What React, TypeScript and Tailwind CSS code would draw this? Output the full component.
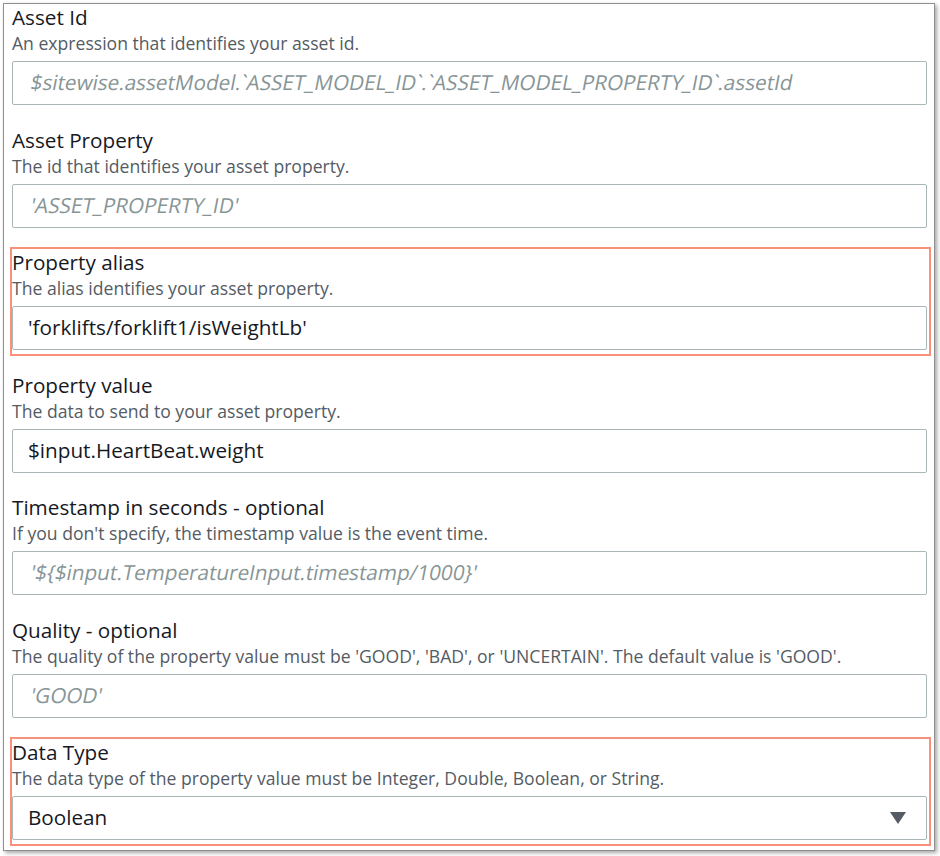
import React from 'react';
import { clsx } from 'clsx';

interface FieldProps {
  label: string;
  description: string;
  value?: string;
  placeholder?: string;
  highlighted?: boolean;
  select?: boolean;
}

const Field: React.FC<FieldProps> = ({ label, description, value, placeholder, highlighted, select }) => {
  return (
    <div
      className={clsx(
        'ml-[8px] w-[917px] pb-[4px] flex flex-col',
        highlighted && 'outline-2 outline-[#f9907c]'
      )}
    >
      <div className="h-[26px] leading-[26px] text-[20.7px] text-[#16191f] whitespace-nowrap">{label}</div>
      <div className="h-[26px] leading-[26px] text-[17.6px] text-[#545b64] whitespace-nowrap">{description}</div>
      <div className="mt-[5px] w-[915px] h-[44px] border border-[#aab7b8] rounded-[2px] flex items-center pl-[15px] pr-[20px]">
        {value ? (
          <span className="flex-1 text-[20.7px] text-[#16191f] whitespace-nowrap">{value}</span>
        ) : (
          <span className="flex-1 text-[20.7px] text-[#879596] whitespace-nowrap">
            <span className="inline-block -skew-x-[11deg] origin-bottom">{placeholder}</span>
          </span>
        )}
        {select && (
          <svg width="16" height="12" viewBox="0 0 16 12" className="shrink-0">
            <path d="M0 0 H16 L8 12 Z" fill="#545b64" />
          </svg>
        )}
      </div>
    </div>
  );
};

export default function App() {
  return (
    <div className="w-[940px] h-[856px] bg-white pt-[3px] pl-[3px]" style={{ fontFamily: '"Open Sans", "Liberation Sans", sans-serif' }}>
      <div className="w-[932px] h-[848px] border border-[#8f8f8f] shadow-[2px_2px_4px_rgba(0,0,0,0.35)] flex flex-col gap-[17.5px] overflow-hidden">
        <Field
          label="Asset Id"
          description="An expression that identifies your asset id."
          placeholder="$sitewise.assetModel.`ASSET_MODEL_ID`.`ASSET_MODEL_PROPERTY_ID`.assetId"
        />
        <Field
          label="Asset Property"
          description="The id that identifies your asset property."
          placeholder="'ASSET_PROPERTY_ID'"
        />
        <Field
          label="Property alias"
          description="The alias identifies your asset property."
          value="'forklifts/forklift1/isWeightLb'"
          highlighted
        />
        <Field
          label="Property value"
          description="The data to send to your asset property."
          value="$input.HeartBeat.weight"
        />
        <Field
          label="Timestamp in seconds - optional"
          description="If you don't specify, the timestamp value is the event time."
          placeholder="'${$input.TemperatureInput.timestamp/1000}'"
        />
        <Field
          label="Quality - optional"
          description="The quality of the property value must be 'GOOD', 'BAD', or 'UNCERTAIN'. The default value is 'GOOD'."
          placeholder="'GOOD'"
        />
        <Field
          label="Data Type"
          description="The data type of the property value must be Integer, Double, Boolean, or String."
          value="Boolean"
          highlighted
          select
        />
      </div>
    </div>
  );
}
